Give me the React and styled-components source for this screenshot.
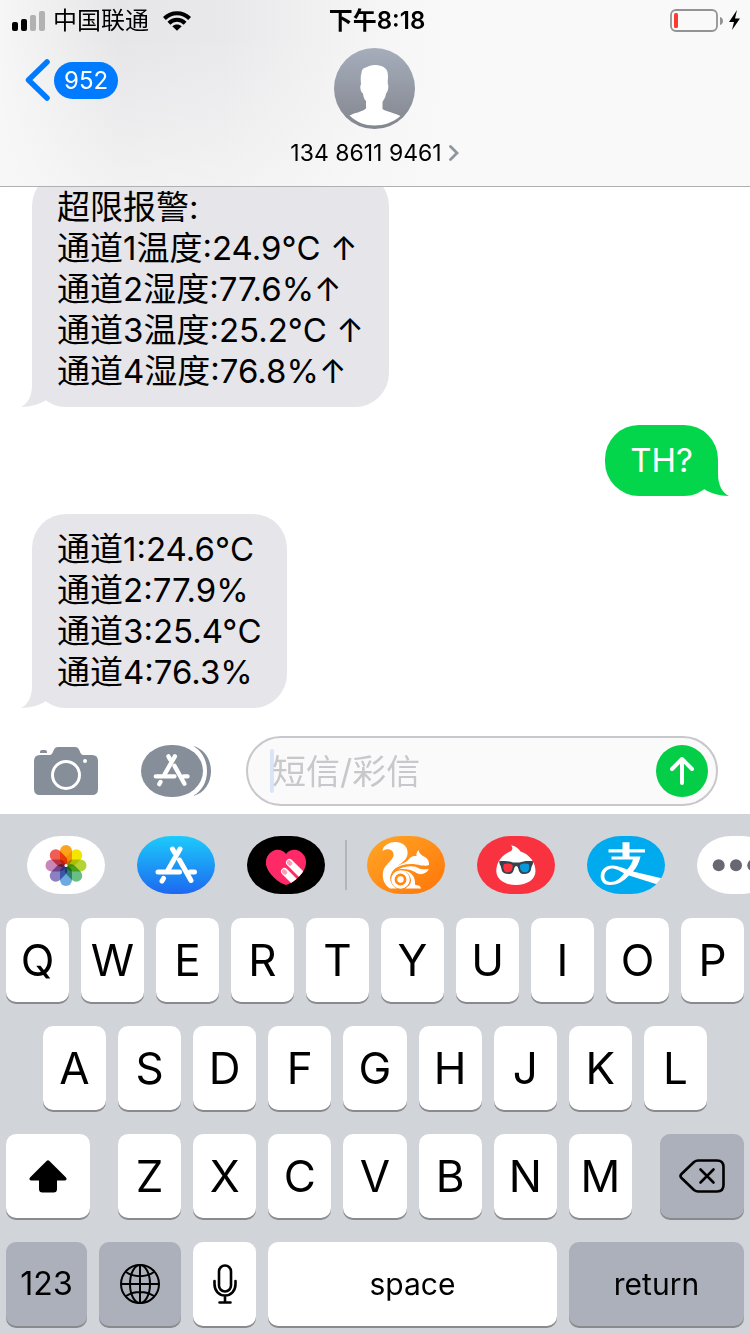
import React, { useState } from "react";
import styled, { createGlobalStyle } from "styled-components";

const messages = [
  {
    id: 1,
    mine: false,
    lines: [
      "超限报警:",
      "通道1温度:24.9°C ↑",
      "通道2湿度:77.6%↑",
      "通道3温度:25.2°C ↑",
      "通道4湿度:76.8%↑",
    ],
  },
  { id: 2, mine: true, lines: ["TH?"] },
  {
    id: 3,
    mine: false,
    lines: ["通道1:24.6°C", "通道2:77.9%", "通道3:25.4°C", "通道4:76.3%"],
  },
];

const petals = [
  "#fba31c",
  "#f5e400",
  "#b4d435",
  "#68bf83",
  "#6cabdf",
  "#8b80c2",
  "#c987b9",
  "#f05d52",
];

function StoreMark() {
  return (
    <g fill="none" stroke="#fff" strokeWidth="5" strokeLinecap="round">
      <path d="M43 13L31 34" />
      <path d="M35.500 13L37.500 16.500" />
      <path d="M42.500 24L54 44.500" />
      <path d="M21 36H42.500M53 36H57.500" />
      <path d="M26.500 42.500L25 45" />
    </g>
  );
}

function SignalIcon() {
  return (
    <svg width="34" height="20" viewBox="0 0 34 20" aria-hidden="true">
      <rect x="0" y="11" width="6" height="9" rx="2" />
      <rect x="9" y="8" width="6" height="12" rx="2" />
      <rect x="18" y="4" width="6" height="16" rx="2" fill="#b2b2b3" />
      <rect x="27" y="0" width="6" height="20" rx="2" fill="#b2b2b3" />
    </svg>
  );
}

function WifiIcon() {
  return (
    <svg width="28" height="20" viewBox="0 0 28 20" aria-hidden="true">
      <g fill="none" stroke="#000" strokeWidth="4">
        <path d="M1.400 7.500C8.400 0.400 19.600 0.400 26.600 7.500" />
        <path d="M5.900 12.200C10.500 7.700 17.500 7.700 22.100 12.200" />
      </g>
      <path d="M9.300 15.200C12 12.900 16 12.900 18.700 15.200L14 19.800Z" />
    </svg>
  );
}

function BatteryIcon() {
  return (
    <svg width="72" height="24" viewBox="0 0 72 24" aria-hidden="true">
      <rect x="1" y="1" width="46" height="21" rx="5" fill="none" stroke="#939393" strokeWidth="1.8" />
      <rect x="4" y="4" width="4" height="15" rx="1.500" fill="#ff3b30" />
      <path d="M50 8C54 9 54 15 50 16Z" fill="#939393" />
      <path d="M67 1L59 13H64L62 21L70 9.500H65Z" />
    </svg>
  );
}

function Avatar() {
  return (
    <svg width="81" height="81" viewBox="0 0 81 81" aria-hidden="true">
      <defs>
        <linearGradient id="avatar" x1="0" y1="0" x2="0" y2="1">
          <stop offset="0" stopColor="#a6adbb" />
          <stop offset="1" stopColor="#82868f" />
        </linearGradient>
      </defs>
      <circle cx="40.500" cy="40.500" r="40.500" fill="url(#avatar)" />
      <path
        fill="#fff"
        d="M40 17C45 17 52 18 53.500 24C54.500 29 53.500 33 53.800 36C55 38 54 44 52 45.500C51.500 50 50 51 48.500 54V61C52 63.500 61 65 66.500 68C59 74.500 50 77.500 40.500 77.500C31 77.500 23 74.500 15.500 67.500C20 65 28 64 32 60.500V53C30 51 29.500 49 29 45.500C26.500 44 25.500 38 27 36.500C27 33 26 29 27.500 25C28 19 32 20 34 18.500C36 17.500 38 17 40 17Z"
      />
    </svg>
  );
}

function CameraIcon() {
  return (
    <svg width="64" height="48" viewBox="0 0 64 48" aria-hidden="true">
      <path
        fill="#868e99"
        d="M6 8H15C18 8 18.500 6 19.500 3.500C20.500 1 22 0 24 0H41C43 0 44.500 1 45.500 3.500C46.500 6 47 8 50 8H58Q64 8 64 14V42Q64 48 58 48H6Q0 48 0 42V14Q0 8 6 8Z"
      />
      <path fill="#868e99" d="M6 6V5Q6 3 8 3H11Q13 3 13 5V6Z" />
      <circle cx="32" cy="28" r="13.500" fill="none" stroke="#fff" strokeWidth="3" />
      <circle cx="51" cy="14" r="2" fill="#fff" />
    </svg>
  );
}

function StoreIcon() {
  return (
    <svg width="70" height="52" viewBox="0 0 70 52" aria-hidden="true">
      <rect width="62" height="52" rx="30" ry="26" fill="#868e99" />
      <path
        fill="#868e99"
        d="M52 1C64 4 70 15 70 26C70 37 64 48 52 51C61 46 66 37 66 26C66 15 61 6 52 1Z"
      />
      <g transform="translate(-3.500 0) scale(0.870)">
        <StoreMark />
      </g>
    </svg>
  );
}

function PhotosArt() {
  return (
    <svg viewBox="0 0 78 58" aria-hidden="true">
      <rect width="78" height="58" fill="#fff" />
      <g transform="translate(39 29.500)">
        {petals.map((color, i) => (
          <Petal
            key={color}
            x="-6"
            y="-20.500"
            width="12"
            height="20"
            rx="6"
            fill={color}
            transform={`rotate(${i * 45})`}
          />
        ))}
        <circle r="1.500" fill="#fff" />
      </g>
    </svg>
  );
}

function AppStoreArt() {
  return (
    <svg viewBox="0 0 78 58" aria-hidden="true">
      <defs>
        <linearGradient id="store" x1="0" y1="0" x2="0" y2="1">
          <stop offset="0" stopColor="#1ccbfb" />
          <stop offset="1" stopColor="#1d68f0" />
        </linearGradient>
      </defs>
      <rect width="78" height="58" fill="url(#store)" />
      <StoreMark />
    </svg>
  );
}

function HeartArt() {
  const heart =
    "M39 18C43 13 49 13 53 15.500C59 19 61 27 57 34C54 40 46 47 39 49C32 47 24 40 21 34C17 27 19 19 25 15.500C29 13 35 13 39 18Z";
  return (
    <svg viewBox="0 0 78 58" aria-hidden="true">
      <defs>
        <clipPath id="heart">
          <path d={heart} />
        </clipPath>
      </defs>
      <rect width="78" height="58" />
      <path d={heart} fill="#ff2968" />
      <g clipPath="url(#heart)" fill="none" strokeLinecap="round">
        <path d="M42.500 26.500L62 46M37.500 35.500L56 54" stroke="#fff" strokeWidth="7" />
        <path d="M42 26.500L43 27.500M37 35.500L38 36.500" stroke="#ff9cb5" strokeWidth="4.500" />
      </g>
    </svg>
  );
}

function SquirrelArt() {
  return (
    <svg viewBox="0 0 78 58" aria-hidden="true">
      <defs>
        <linearGradient id="squirrel" x1="0" y1="0" x2="1" y2="1">
          <stop offset="0" stopColor="#ffa727" />
          <stop offset="1" stopColor="#ff7508" />
        </linearGradient>
      </defs>
      <rect width="78" height="58" fill="url(#squirrel)" />
      <g fill="#fff">
        <path d="M15.500 15C16 9 23 5.500 29.500 6C37 6.500 41.500 12 40.500 18.500C39.500 25 33 27.500 28 32.500C24 36.500 22 41 24 46C25 49 27 51 30 52.500H23C17 49 15 42 16 36C17 29 25 25 26.500 20C27.500 14 21 11 15.500 15Z" />
        <path d="M27 33C32 27.500 38 28 42 23C44 20.500 46 20 49.500 20C49 17.500 50 15.500 51.500 14C52 17.500 54 18.500 56 20C60 21.500 62.500 25 62 29C60 30 57 29.500 54 29.500C45 26.500 34 28 27 33Z" />
        <path d="M31 33.500C39 29.500 48 29.500 52 32.500C56 33.500 60 33.500 62 33C59 38 53 40 48 36C43 33.500 38 32.500 31 33.500Z" />
        <path d="M34 34.500C43 34 49 40 48 48.500C50 50 53.500 48.500 54 52.500H38C43 50 45 46 43.500 42C42 37 38 35 34 34.500Z" />
      </g>
      <circle cx="33.500" cy="43.500" r="7.600" fill="none" stroke="#fff" strokeWidth="3.400" />
      <circle cx="33.500" cy="43.500" r="3.200" fill="#fff" />
    </svg>
  );
}

function DuckArt() {
  return (
    <svg viewBox="0 0 78 58" aria-hidden="true">
      <rect width="78" height="58" fill="#f8333f" />
      <path
        fill="#fff"
        d="M34 9.500C37 9 42 12.500 43.500 15.500C52 18 58.500 26 58.500 35C58.500 43.500 50 49 39 49C28 49 19.300 43.500 19.300 35C19.300 26 25 19 33 15.500C36 14 36 11 34 9.500Z"
      />
      <path
        fill="#35434c"
        d="M22 25.300C28 24.500 33 25 36 26.500H42.500C46 25 51 24.500 56.500 25.300L55.500 29C54.500 29.500 54.500 32 53.500 35C52 38.500 45 39 43 36.500C41 34 41.500 30 39.300 30C37 30 37.500 34 35.500 36.500C33.500 39 26.500 38.500 25 35C24 32 24 29.500 23 29Z"
      />
      <path fill="#f8333f" d="M27 28C30 27 34 27.500 35.500 29C36 31 35 34 33.500 35.500C31.500 37 28 36.500 27 34.500C26 32 26 29.500 27 28Z" />
      <path fill="#0898dc" d="M51.500 28C48.500 27 44.500 27.500 43 29C42.500 31 43.500 34 45 35.500C47 37 50.500 36.500 51.500 34.500C52.500 32 52.500 29.500 51.500 28Z" />
    </svg>
  );
}

function PayArt() {
  return (
    <svg viewBox="0 0 78 58" aria-hidden="true">
      <rect width="78" height="58" fill="#00aaef" />
      <path
        fill="#fff"
        d="M35.500 6.300H42.500V13.300H58V16.500H42.500V20.500H53.500C52 27 49.500 31.500 46 35.500L75.500 42.500L70.500 48.500L42 39.500C36 46 30 49 23 49C16 49 13 44 13.800 38.500C15 32 20 29.300 26 29.500C31 30 35 31.500 40 33.500C43 30.500 45 27 46 23.500H24.500V20.500H35.500V16.500H21.500V13.300H35.500Z"
      />
      <path
        fill="#00aaef"
        d="M37 37.300C33 43 28.500 46 23.500 46C19 46 16.800 42.500 17.500 38.800C18.500 34.500 22 32.300 26 32.500C30 33 33 35 37 37.300Z"
      />
    </svg>
  );
}

function MoreArt() {
  return (
    <svg viewBox="0 0 78 58" aria-hidden="true">
      <rect width="78" height="58" fill="#fff" />
      <g fill="#686872">
        <circle cx="21.700" cy="29.300" r="6" />
        <circle cx="39" cy="29.300" r="6" />
        <circle cx="56.300" cy="29.300" r="6" />
      </g>
    </svg>
  );
}

function ShiftIcon() {
  return (
    <svg width="38" height="33" viewBox="0 0 38 33" aria-hidden="true">
      <path d="M17.800 0.800Q19 -0.300 20.200 0.800L37 17.500Q38.500 20 36 20.500H28V29Q28 32.500 24.500 32.500H13.500Q10 32.500 10 29V20.500H2Q-0.500 20 1 17.500Z" />
    </svg>
  );
}

function DeleteIcon() {
  return (
    <svg width="46" height="34" viewBox="0 0 46 34" aria-hidden="true">
      <g fill="none" stroke="#000" strokeLinecap="round" strokeLinejoin="round">
        <path
          strokeWidth="2.600"
          d="M19 1.500H38Q44.500 1.500 44.500 8V26Q44.500 32.500 38 32.500H19Q17 32.500 15 31L2.500 19Q0.500 17 2.500 15L15 3Q17 1.500 19 1.500Z"
        />
        <path strokeWidth="2.600" d="M21.500 10.500L34.500 23.500M34.500 10.500L21.500 23.500" />
      </g>
    </svg>
  );
}

function GlobeIcon() {
  return (
    <svg width="40" height="40" viewBox="0 0 40 40" aria-hidden="true">
      <g fill="none" stroke="#000" strokeWidth="2">
        <circle cx="20" cy="20" r="19" />
        <ellipse cx="20" cy="20" rx="10" ry="19" />
        <path d="M20 1V39M1 20H39M6 8C14 13.500 26 13.500 34 8M6 32C14 26.500 26 26.500 34 32" />
      </g>
    </svg>
  );
}

function MicIcon() {
  return (
    <svg width="24" height="40" viewBox="0 0 24 40" aria-hidden="true">
      <g fill="none" stroke="#000" strokeWidth="2.600" strokeLinecap="round">
        <rect x="6" y="1.500" width="12" height="26" rx="6" />
        <path d="M1.500 17V20C1.500 27 6 31.500 12 31.500C18 31.500 22.500 27 22.500 20V17M12 31.500V38M6.500 38.500H17.500" />
      </g>
    </svg>
  );
}

const apps = [
  { name: "Photos", Art: PhotosArt },
  { name: "App Store", Art: AppStoreArt },
  { name: "Digital Touch", Art: HeartArt, last: true },
  { name: "UC", Art: SquirrelArt },
  { name: "Movies", Art: DuckArt },
  { name: "Alipay", Art: PayArt },
  { name: "More", Art: MoreArt },
];

export default function App() {
  const [draft, setDraft] = useState("");

  const type = (char) => setDraft((prev) => prev + char);

  const renderLetters = (letters) =>
    letters.split("").map((letter) => (
      <Key key={letter} onClick={() => type(letter)}>
        {letter}
      </Key>
    ));

  return (
    <Phone>
      <GlobalStyle />
      <Header>
        <StatusBar>
          <Carrier>
            <SignalIcon />
            <span>中国联通</span>
            <WifiIcon />
          </Carrier>
          <Clock>下午8:18</Clock>
          <Power>
            <BatteryIcon />
          </Power>
        </StatusBar>
        <NavBar>
          <BackButton aria-label="Back, 952 unread">
            <svg width="25" height="42" viewBox="0 0 25 42" aria-hidden="true">
              <path
                d="M22 3L3.500 21L22 39"
                fill="none"
                stroke="#007aff"
                strokeWidth="5.500"
                strokeLinecap="round"
                strokeLinejoin="round"
              />
            </svg>
            <Unread>952</Unread>
          </BackButton>
          <Contact>
            <Avatar />
            <ContactName>
              134 8611 9461
              <svg width="10" height="16" viewBox="0 0 10 16" aria-hidden="true">
                <path
                  d="M1.500 1.500L8 8L1.500 14.500"
                  fill="none"
                  stroke="#8e959f"
                  strokeWidth="2.800"
                  strokeLinecap="round"
                />
              </svg>
            </ContactName>
          </Contact>
        </NavBar>
      </Header>

      <Thread>
        {messages.map((message) => (
          <Bubble key={message.id} $mine={message.mine}>
            {message.lines.map((line) => (
              <p key={line}>{line}</p>
            ))}
            <Tail $mine={message.mine} viewBox="0 0 31 34" aria-hidden="true">
              <path d="M11 0V12C11 24 6 31 0 34C10 34 19 31 25 27L31 20V0Z" />
            </Tail>
          </Bubble>
        ))}
      </Thread>

      <Compose onSubmit={(e) => e.preventDefault()}>
        <IconButton type="button" aria-label="Camera">
          <CameraIcon />
        </IconButton>
        <IconButton type="button" aria-label="Apps">
          <StoreIcon />
        </IconButton>
        <Field>
          <Caret />
          <MessageInput
            aria-label="短信/彩信"
            placeholder="短信/彩信"
            value={draft}
            onChange={(e) => setDraft(e.target.value)}
          />
          <SendButton aria-label="Send">
            <svg width="24" height="28" viewBox="0 0 24 28" aria-hidden="true">
              <path
                d="M12 26V3M2 12L12 2L22 12"
                fill="none"
                stroke="#fff"
                strokeWidth="4"
                strokeLinecap="round"
                strokeLinejoin="round"
              />
            </svg>
          </SendButton>
        </Field>
      </Compose>

      <Keyboard>
        <Tray>
          {apps.map(({ name, Art, last }) => (
            <React.Fragment key={name}>
              <AppButton aria-label={name}>
                <Art />
              </AppButton>
              {last && <Divider />}
            </React.Fragment>
          ))}
        </Tray>
        <Keys>
          <KeyRow>{renderLetters("QWERTYUIOP")}</KeyRow>
          <KeyRow $inset>{renderLetters("ASDFGHJKL")}</KeyRow>
          <LetterRow>
            <Key aria-label="Shift">
              <ShiftIcon />
            </Key>
            <KeyRow>{renderLetters("ZXCVBNM")}</KeyRow>
            <Key $dark aria-label="Delete" onClick={() => setDraft((prev) => prev.slice(0, -1))}>
              <DeleteIcon />
            </Key>
          </LetterRow>
          <BottomRow>
            <Key $dark $size={32}>
              123
            </Key>
            <Key $dark aria-label="Next keyboard">
              <GlobeIcon />
            </Key>
            <Key aria-label="Dictation">
              <MicIcon />
            </Key>
            <Key $size={30} onClick={() => type(" ")}>
              space
            </Key>
            <Key $dark $size={30}>
              return
            </Key>
          </BottomRow>
        </Keys>
      </Keyboard>
    </Phone>
  );
}

const GlobalStyle = createGlobalStyle`
  * {
    box-sizing: border-box;
  }
  body {
    margin: 0;
    background: #fff;
    color: #000;
    font-family: Inter, "Noto Sans CJK SC", sans-serif;
  }
  button, input {
    font-family: inherit;
    color: inherit;
    border: 0;
    padding: 0;
    margin: 0;
    background: none;
  }
  svg {
    display: block;
    flex-shrink: 0;
  }
  p {
    margin: 0;
  }
`;

const Phone = styled.div`
  display: flex;
  flex-direction: column;
  height: 100vh;
  overflow: hidden;
`;

const Header = styled.header`
  flex-shrink: 0;
  border-bottom: 1px solid #b0b0b2;
  background: linear-gradient(180deg, rgba(249, 249, 249, 0) 20%, rgba(249, 249, 249, 0.6) 100%),
    linear-gradient(90deg, #f6f6f6 0%, #e6e6e8 16%, #e9e9eb 30%, #f5f5f5 50%, #f9f9f9 60%);
`;

const StatusBar = styled.div`
  display: grid;
  grid-template-columns: 1fr auto 1fr;
  align-items: center;
  height: 41px;
  padding: 0 8px 0 12px;
  font-size: 24px;
  line-height: 41px;
`;

const Carrier = styled.div`
  display: flex;
  align-items: center;
  span {
    margin: 0 14px 0 7px;
  }
`;

const Clock = styled.time`
  font-weight: 600;
`;

const Power = styled.div`
  display: flex;
  justify-content: flex-end;
`;

const NavBar = styled.nav`
  display: grid;
  grid-template-columns: 1fr auto 1fr;
  align-items: start;
  padding: 7px 26px 19px 25px;
`;

const BackButton = styled.button`
  display: flex;
  align-items: center;
  gap: 4px;
  padding-top: 11px;
`;

const Unread = styled.span`
  padding: 0 10px;
  border-radius: 19px;
  background: #007aff;
  color: #fff;
  font-size: 24px;
  line-height: 37px;
`;

const Contact = styled.button`
  display: flex;
  flex-direction: column;
  align-items: center;
  gap: 10px;
`;

const ContactName = styled.span`
  display: flex;
  align-items: center;
  gap: 7px;
  font-size: 23px;
  line-height: 28px;
`;

const Thread = styled.main`
  flex: 1;
  min-height: 0;
  display: flex;
  flex-direction: column;
  justify-content: flex-end;
  align-items: flex-start;
  gap: 18px;
  padding: 0 32px 28px;
  overflow: hidden;
`;

const Bubble = styled.div`
  position: relative;
  flex-shrink: 0;
  align-self: ${({ $mine }) => ($mine ? "flex-end" : "flex-start")};
  padding: 15px 25px;
  border-radius: 34px;
  background: ${({ $mine }) => ($mine ? "#04d64b" : "#e5e5ea")};
  color: ${({ $mine }) => ($mine ? "#fff" : "#000")};
  fill: ${({ $mine }) => ($mine ? "#04d64b" : "#e5e5ea")};
  font-size: 33px;
  line-height: 41px;
`;

const Tail = styled.svg`
  position: absolute;
  bottom: 0;
  ${({ $mine }) => ($mine ? "right: -11px; transform: scaleX(-1);" : "left: -11px;")}
  width: 31px;
  height: 34px;
`;

const Compose = styled.form`
  flex-shrink: 0;
  display: flex;
  align-items: center;
  padding: 0 32px 8px 34px;
`;

const IconButton = styled.button`
  margin-right: 43px;
  & + & {
    margin-right: 35px;
  }
`;

const Field = styled.div`
  flex: 1;
  min-width: 0;
  display: flex;
  align-items: center;
  height: 70px;
  padding: 0 8px 0 22px;
  border: 2px solid #c7c7cc;
  border-radius: 35px;
  background: #fafafa;
`;

const Caret = styled.span`
  width: 4px;
  height: 44px;
  margin-right: -2px;
  border-radius: 2px;
  background: #dce4fa;
`;

const MessageInput = styled.input`
  flex: 1;
  min-width: 0;
  height: 50px;
  font-size: 34px;
  outline: none;
  &::placeholder {
    color: #c7c7cc;
    opacity: 1;
  }
`;

const SendButton = styled.button`
  display: flex;
  align-items: center;
  justify-content: center;
  width: 52px;
  height: 52px;
  border-radius: 50%;
  background: #04cd48;
`;

const Keyboard = styled.section`
  flex-shrink: 0;
  background: #d1d4d9;
`;

const Tray = styled.div`
  display: flex;
  align-items: center;
  gap: 32px;
  padding: 22px 0 24px 27px;
  overflow: hidden;
`;

const AppButton = styled.button`
  flex-shrink: 0;
  width: 78px;
  height: 58px;
  border-radius: 34px / 29px;
  overflow: hidden;
`;

const Petal = styled.rect`
  mix-blend-mode: multiply;
`;

const Divider = styled.span`
  flex-shrink: 0;
  width: 2px;
  height: 50px;
  margin: 0 -12px;
  background: #b4b6bb;
`;

const Keys = styled.div`
  display: grid;
  gap: 24px;
  padding: 0 6px 8px;
`;

const KeyRow = styled.div`
  display: grid;
  grid-auto-flow: column;
  grid-auto-columns: 1fr;
  gap: 12px;
  padding: 0 ${({ $inset }) => ($inset ? "5%" : "0")};
`;

const LetterRow = styled.div`
  display: grid;
  grid-template-columns: 84fr 514fr 84fr;
  gap: 28px;
`;

const BottomRow = styled.div`
  display: grid;
  grid-template-columns: 81fr 82fr 63fr 289fr 175fr;
  gap: 12px;
`;

const Key = styled.button`
  display: flex;
  align-items: center;
  justify-content: center;
  min-width: 0;
  height: 84px;
  border-radius: 10px;
  background: ${({ $dark }) => ($dark ? "#abb0ba" : "#fff")};
  box-shadow: 0 2px 0 #898a8d;
  font-size: ${({ $size }) => $size || 44}px;
  line-height: 1;
`;
